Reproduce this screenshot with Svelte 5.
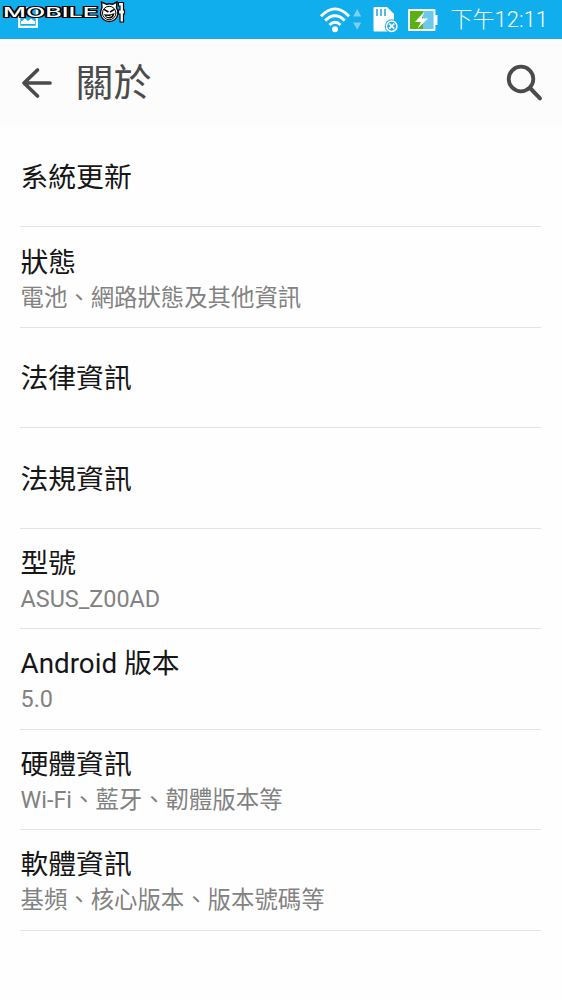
<script lang="ts">
  const items = [
    { title: '系統更新', summary: '' },
    { title: '狀態', summary: '電池、網路狀態及其他資訊' },
    { title: '法律資訊', summary: '' },
    { title: '法規資訊', summary: '' },
    { title: '型號', summary: 'ASUS_Z00AD' },
    { title: 'Android 版本', summary: '5.0' },
    { title: '硬體資訊', summary: 'Wi-Fi、藍牙、韌體版本等' },
    { title: '軟體資訊', summary: '基頻、核心版本、版本號碼等' }
  ];
</script>

<div class="screen" lang="zh-Hant">
  <div class="status-bar">
    <svg class="picture" width="20" height="22" viewBox="0 0 20 22">
      <path d="M1.2 1.2h17.6v18.6H1.2z" fill="none" stroke="#fff" stroke-width="2.2" />
      <path d="M3 17v-2.5l4-3 3 2.5 3-2.5 4 3V17z" fill="#fff" />
    </svg>

    <svg class="watermark" width="128" height="28" viewBox="0 0 128 28">
      <text class="brand" x="3" y="17" textLength="95" lengthAdjust="spacingAndGlyphs">MOBILE</text>
      <path d="M102 7.5l-.5-5.5 5 2.2q3-.8 6 0l4.5-2.2-.5 5.5q3.5 7-1.5 12-5.500 4-11.500 0-5-5-1.500-12z" fill="#fff" stroke="#000" stroke-width="1.4" />
      <circle cx="109.2" cy="13" r="6.7" fill="none" stroke="#000" stroke-width="1" />
      <path d="M104 9.300l4.500 2.700M114.500 9.300L110 12" stroke="#000" stroke-width="1.500" />
      <path d="M104 14q5.500 1.500 10.500-1-.5 5-4.500 5.500-4.500 0-6-4.500z" fill="#000" />
      <path d="M106.500 16.300q3 1 5.500-.8" fill="none" stroke="#fff" />
      <path d="M118.500 2.500h5v7.500h1v4h-1v8H120v-8h-1.500v-4h1.500V6h-1.500z" fill="#fff" stroke="#000" stroke-width="1.2" />
    </svg>

    <svg class="wifi" width="42" height="28" viewBox="0 0 42 28">
      <g fill="none" stroke="#fff" stroke-width="2.9">
        <path d="M1 10.2Q15 -4.4 29 10.2" />
        <path d="M5.2 14.6Q15 4.8 24.8 14.6" />
        <path d="M9.5 19Q15 13.6 20.5 19" />
      </g>
      <circle cx="15" cy="23.3" r="3" fill="#fff" />
      <path d="M33.2 10.5l4-7.5 4 7.5zM33.2 16.5h8l-4 7.2z" fill="#7dd0f3" />
    </svg>

    <svg class="sd" width="26" height="28" viewBox="0 0 26 28">
      <path d="M1.5 1H14l7 7v17.5H1.5q-1 0-1-1V2q0-1 1-1z" fill="#fff" />
      <path d="M4 3v7M8 3v7M12 3v7" stroke="#2ba9df" stroke-width="1.6" />
      <circle cx="18.7" cy="20.2" r="6.9" fill="#12aeeb" />
      <circle cx="18.7" cy="20.2" r="5.2" fill="#2ba9df" stroke="#fff" stroke-width="1.5" />
      <path d="M16.2 17.7l5 5M21.2 17.7l-5 5" stroke="#fff" stroke-width="1.8" />
    </svg>

    <svg class="battery" width="31" height="22" viewBox="0 0 31 22">
      <path d="M27 6h2.5v10H27z" fill="#fff" />
      <path d="M1 1h25.5v20H1z" fill="#6cc9ed" stroke="#fff" stroke-width="1.8" />
      <path d="M2 2h13v18H2z" fill="#5cb112" />
      <path d="M16.5 2.500L7 13h6l-3.500 6.700L20 9.500h-6.200z" fill="#fff" />
    </svg>

    <span class="clock">下午12:11</span>
  </div>

  <header>
    <svg class="back" width="32" height="32" viewBox="0 0 32 32">
      <path d="M16.5 3L3 16l13.5 13M3.5 16H29" fill="none" stroke="#4b4b4b" stroke-width="3.7" stroke-linecap="round" stroke-linejoin="round" />
    </svg>
    <h1>關於</h1>
    <svg class="search" width="38" height="38" viewBox="0 0 38 38">
      <circle cx="16" cy="15" r="12.3" fill="none" stroke="#4b4b4b" stroke-width="3.8" />
      <path d="M25 24L35 34.3" stroke="#4b4b4b" stroke-width="4" stroke-linecap="round" />
    </svg>
  </header>

  <ul>
    {#each items as item}
      <li class:detailed={item.summary}>
        <div class="title">{item.title}</div>
        {#if item.summary}
          <div class="summary">{item.summary}</div>
        {/if}
      </li>
    {/each}
  </ul>
</div>

<style>
  :global(body) {
    background: #fefefe;
  }

  .screen {
    height: 1000px;
    overflow: hidden;
    font-family: Roboto, "Noto Sans CJK TC", sans-serif;
  }

  svg {
    display: block;
    flex: none;
  }

  .status-bar {
    position: relative;
    display: flex;
    align-items: center;
    height: 39px;
    box-sizing: border-box;
    padding: 1px 14px 0 0;
    background: #10aeec;
    border-bottom: 1px solid #1ba4dc;
  }

  .picture {
    margin: 6px auto 0 18px;
    align-self: flex-start;
  }

  /* site logo stamped over the status icons */
  .watermark {
    position: absolute;
    left: 0;
    top: 0;
  }

  .brand {
    font-family: Inter, sans-serif;
    font-size: 12.5px;
    font-weight: 500;
    fill: #fff;
    stroke: #000;
    stroke-width: 2px;
    paint-order: stroke;
  }

  .wifi {
    margin-right: 11px;
  }

  .sd {
    margin-right: 9px;
  }

  .battery {
    margin-right: 12px;
  }

  .clock {
    font-size: 22px;
    font-weight: 300;
    line-height: 38px;
    color: #fff;
    white-space: nowrap;
  }

  header {
    display: flex;
    align-items: center;
    height: 88px;
    box-sizing: border-box;
    padding: 0 19px 0 21px;
    background: #fcfcfc;
  }

  h1 {
    flex: 1;
    margin: 0 0 0 22.5px;
    font-size: 38px;
    font-weight: 400;
    line-height: 80px;
    color: #4b4b4b;
  }

  ul {
    margin: 0;
    padding: 0 21px 0 20px;
    list-style: none;
  }

  li {
    display: flex;
    flex-direction: column;
    justify-content: center;
    height: 100.45px;
    box-sizing: border-box;
    padding: 2px 0 0 0.5px;
    border-bottom: 1px solid #e3e3e3;
  }

  li.detailed {
    padding-top: 4px;
  }

  .title {
    font-size: 27.8px;
    line-height: 37px;
    color: #161616;
  }

  .summary {
    font-size: 23.4px;
    line-height: 34px;
    color: #828282;
  }
</style>
